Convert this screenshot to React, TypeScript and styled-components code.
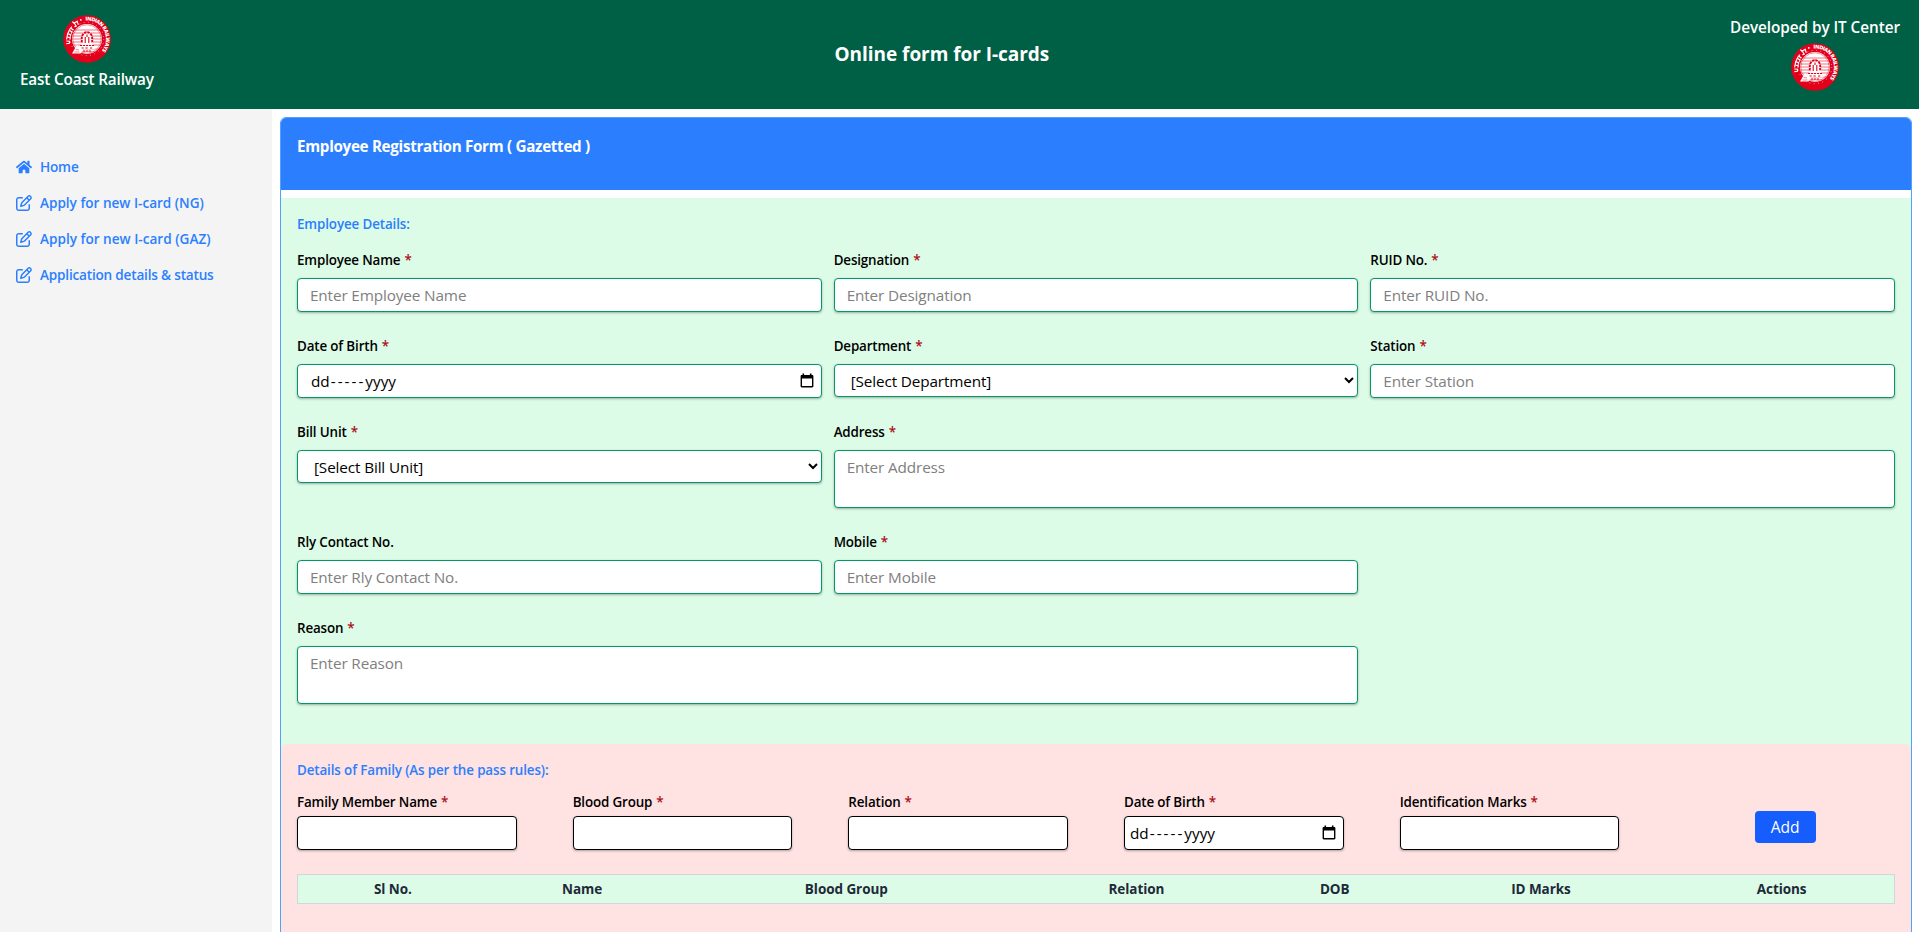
import React from 'react';
import styled, { createGlobalStyle, css } from 'styled-components';
import { FaHome } from 'react-icons/fa';
import { FaRegPenToSquare } from 'react-icons/fa6';

const GlobalStyle = createGlobalStyle`
  *, *::before, *::after { box-sizing: border-box; }
  body {
    margin: 0;
    background: #fff;
    color: #000;
    font-family: "Open Sans", "Noto Sans", sans-serif;
    overflow: hidden;
  }
  input, select, textarea, button { font: inherit; letter-spacing: inherit; margin: 0; }
`;

const Page = styled.div`
  height: 932px;
  display: flex;
  flex-direction: column;
  overflow: hidden;
`;

const Header = styled.header`
  flex: none;
  height: 109px;
  padding: 15px 19px 0 20px;
  display: flex;
  justify-content: space-between;
  background: #006045;
  color: #fff;
`;

const Brand = styled.div<{ $gap: number }>`
  display: flex;
  flex-direction: column;
  align-items: center;
  gap: ${(p) => p.$gap}px;
`;

const BrandText = styled.span<{ $track: number }>`
  font-size: 15.3px;
  font-weight: 600;
  line-height: 24px;
  letter-spacing: ${(p) => p.$track}px;
  white-space: nowrap;
`;

const Title = styled.h1`
  margin: 25px 0 0;
  font-size: 19px;
  font-weight: 700;
  line-height: 28px;
  letter-spacing: -0.04px;
`;

const Body = styled.div`
  flex: 1;
  min-height: 0;
  display: flex;
`;

const Sidebar = styled.nav`
  flex: none;
  width: 272px;
  padding: 40px 16px;
  background: #f4f4f4;
`;

const NavItem = styled.a<{ $track: number }>`
  display: flex;
  align-items: center;
  gap: 8px;
  height: 36px;
  color: #2b7fff;
  font-size: 13.6px;
  font-weight: 600;
  line-height: 20px;
  letter-spacing: ${(p) => p.$track}px;
  svg { flex: none; font-size: 16px; }
`;

const NavText = styled.span`
  padding-bottom: 1px;
`;

const Main = styled.main`
  flex: 1;
  min-width: 0;
  padding: 8px 7px 0 8px;
`;

const Card = styled.section`
  height: 900px;
  border: 1px solid #51a2ff;
  border-radius: 6px;
  overflow: hidden;
`;

const CardHeader = styled.div`
  height: 72px;
  padding: 16px;
  margin-bottom: 8px;
  background: #2b7fff;
  color: #fff;
  font-size: 15.2px;
  font-weight: 700;
  line-height: 24px;
  letter-spacing: -0.3px;
`;

const FormArea = styled.div`
  background: #dcfce7;
`;

const EmployeeSection = styled.section`
  padding: 16px 16px 40px;
`;

const FamilySection = styled.section`
  height: 300px;
  padding: 16px;
  border-radius: 6px 6px 0 0;
  background: #ffe2e2;
`;

const SectionTitle = styled.h2<{ $gap: number }>`
  margin: 0 0 ${(p) => p.$gap}px;
  color: #2b7fff;
  font-size: 13.4px;
  font-weight: 600;
  line-height: 20px;
  letter-spacing: -0.12px;
`;

const EmployeeGrid = styled.div`
  display: grid;
  grid-template-columns: repeat(3, 1fr);
  gap: 24px 12px;
  align-items: start;
`;

const FamilyGrid = styled.div`
  display: grid;
  grid-template-columns: repeat(6, 1fr);
  column-gap: 56px;
  align-items: start;
`;

const FieldBox = styled.label<{ $span?: number; $gap: number }>`
  display: flex;
  flex-direction: column;
  gap: ${(p) => p.$gap}px;
  min-width: 0;
  grid-column: span ${(p) => p.$span ?? 1};
`;

const LabelText = styled.span`
  font-size: 13.4px;
  font-weight: 600;
  line-height: 20px;
  letter-spacing: -0.15px;
  white-space: nowrap;
`;

const Star = styled.span`
  margin-left: 4px;
  color: #ac0f1a;
`;

type Tone = 'green' | 'black';

const control = css<{ $tone?: Tone }>`
  display: block;
  width: 100%;
  height: 34px;
  border: 1px solid ${(p) => (p.$tone === 'black' ? '#000' : '#009966')};
  border-radius: 4px;
  background: #fff;
  color: #000;
  font-size: 15.3px;
  line-height: 24px;
  letter-spacing: -0.13px;
  outline: none;
  box-shadow: 0 1px 3px rgba(0, 0, 0, 0.16), 0 1px 2px rgba(0, 0, 0, 0.16);
  &::placeholder { color: #808080; opacity: 1; }
`;

const Input = styled.input<{ $tone?: Tone }>`
  ${control}
  padding: 4px 12px;
`;

const Select = styled.select`
  ${control}
  height: 33px;
  padding: 4px 0 4px 12px;
`;

const TextArea = styled.textarea`
  ${control}
  height: 58px;
  padding: 4px 12px;
  resize: none;
`;

const DateBox = styled.span<{ $tone?: Tone }>`
  ${control}
  display: flex;
  align-items: center;
  justify-content: space-between;
  padding: ${(p) => (p.$tone === 'black' ? '0 7px 0 5px' : '0 7px 0 13px')};
  letter-spacing: 0;
`;

const DateText = styled.span`
  display: flex;
`;

const Dashes = styled.span`
  margin: 0 0 0 1px;
  letter-spacing: 2px;
`;

const AddButton = styled.button`
  justify-self: center;
  width: 61px;
  height: 32px;
  margin-top: 19px;
  padding: 0;
  border: 0;
  border-radius: 4px;
  background: #155dfc;
  color: #fff;
  font-size: 15.6px;
`;

const TableHead = styled.div`
  display: grid;
  grid-template-columns: 190fr 189fr 340fr 241fr 156fr 257fr 225fr;
  align-items: center;
  height: 30px;
  margin-top: 24px;
  border: 1px solid #d1d5dc;
  background: #dcfce7;
  color: #1e2939;
  font-size: 13.5px;
  font-weight: 700;
  letter-spacing: -0.06px;
  text-align: center;
`;

const CalendarIcon = () => (
  <svg width="14" height="16" viewBox="0 0 14 16">
    <path d="M2.5 0.5h1.6v1.6h5.8V0.5h1.6v1.6h.7c.7 0 1.2.5 1.2 1.2v9.9c0 .7-.5 1.2-1.2 1.2H1.8c-.7 0-1.2-.5-1.2-1.2V3.3c0-.7.5-1.2 1.2-1.2h.7zM2 5.6v7.5h10V5.6z" fill="#000" fillRule="evenodd" />
  </svg>
);

const RailwayLogo = ({ id }: { id: string }) => (
  <svg width="48" height="48" viewBox="0 0 48 48">
    <defs>
      <path id={id} d="M22.6 5.6A18.5 18.5 0 1 1 23.9 42.5" />
      <clipPath id={`${id}-disc`}><circle cx="24" cy="24" r="15" /></clipPath>
    </defs>
    <circle cx="24" cy="24" r="23.8" fill="#e3001b" />
    <circle cx="24" cy="24" r="16.7" fill="none" stroke="#fff" strokeWidth="0.9" strokeDasharray="0.9 3.5" opacity="0.7" />
    <circle cx="24" cy="24" r="15" fill="#fff" />
    <g clipPath={`url(#${id}-disc)`} stroke="#e3001b" strokeWidth="0.75">
      <path d="M9 15h30M9 18h30M9 21h30M9 24h30M9 27h30M9 30h30" opacity="0.75" />
      <path d="M13 34h22M15 36.5h18" opacity="0.5" />
    </g>
    <circle cx="24" cy="24" r="14.2" fill="none" stroke="#e3001b" strokeWidth="0.6" opacity="0.7" />
    <path d="M18.2 30V22.5a5.8 6.5 0 0 1 11.6 0V30l2 4H16.2z" fill="#fff" />
    <path d="M18.8 27.5v-4.5a5.2 5.8 0 0 1 10.4 0v4.5" fill="none" stroke="#e3001b" strokeWidth="1.9" strokeDasharray="2.6 0.7" />
    <path d="M22.2 28v-6M25.8 28v-6M24 19.5v2.5" fill="none" stroke="#e3001b" strokeWidth="1.1" />
    <path d="M17 30.5h14M18.5 33h2.5M22.5 33h3M27 33h2.5M20 36h8" fill="none" stroke="#e3001b" strokeWidth="1.1" strokeDasharray="2.2 0.8" />
    <path d="M14 30l-5 8.5h8.5l2.5-3.5z" fill="#fff" />
    <path d="M12.6 34.5l3.4.5M11.5 37h5" stroke="#e3001b" strokeWidth="0.5" />
    <g fill="none" stroke="#fff" strokeWidth="1.15">
      <path d="M3.6 24.5l1-5.5 2.2-4.8 2-2.6" />
      <path d="M3.2 28.8l3.7-.6M3.3 26l3.2.2-.1 2M4 22l3.3.7-.5 2M4.8 18.6l3 1.3-.8 1.9M6.2 15.2l2.9 1.8-1 1.4M7.8 13l2.6 2.2" />
      <path d="M10.4 8.6l4.4-2.7M11.4 8.2l1.8 3-1.9.6M9.2 6.8l2.2 1.3M14 6.4l1.4 3.4" />
    </g>
    <circle cx="17.8" cy="4.9" r="0.9" fill="#fff" />
    <text fill="#fff" fontFamily="Open Sans, sans-serif" fontSize="5.3" fontWeight="800">
      <textPath href={`#${id}`} startOffset="0" textLength="43.5" lengthAdjust="spacing">INDIAN RAILWAYS</textPath>
    </text>
  </svg>
);

const DateControl = ({ tone }: { tone?: Tone }) => (
  <DateBox $tone={tone}>
    <DateText>dd<Dashes>-----</Dashes>yyyy</DateText>
    <CalendarIcon />
  </DateBox>
);

interface FieldProps {
  label: string;
  required?: boolean;
  span?: number;
  gap?: number;
  children: React.ReactNode;
}

const Field = ({ label, required = true, span, gap = 8, children }: FieldProps) => (
  <FieldBox $span={span} $gap={gap}>
    <LabelText>{label}{required && <Star>*</Star>}</LabelText>
    {children}
  </FieldBox>
);

const columns = ['Sl No.', 'Name', 'Blood Group', 'Relation', 'DOB', 'ID Marks', 'Actions'];

export default function App() {
  return (
    <Page>
      <GlobalStyle />
      <Header>
        <Brand $gap={4}>
          <RailwayLogo id="logo-left" />
          <BrandText $track={-0.18}>East Coast Railway</BrandText>
        </Brand>
        <Title>Online form for I-cards</Title>
        <Brand $gap={4}>
          <BrandText $track={-0.05}>Developed by IT Center</BrandText>
          <RailwayLogo id="logo-right" />
        </Brand>
      </Header>
      <Body>
        <Sidebar>
          <NavItem $track={-0.2}><FaHome /><NavText>Home</NavText></NavItem>
          <NavItem $track={-0.02}><FaRegPenToSquare /><NavText>Apply for new I-card (NG)</NavText></NavItem>
          <NavItem $track={0}><FaRegPenToSquare /><NavText>Apply for new I-card (GAZ)</NavText></NavItem>
          <NavItem $track={-0.2}><FaRegPenToSquare /><NavText>Application details &amp; status</NavText></NavItem>
        </Sidebar>
        <Main>
          <Card>
            <CardHeader>Employee Registration Form ( Gazetted )</CardHeader>
            <FormArea>
              <EmployeeSection>
                <SectionTitle $gap={16}>Employee Details:</SectionTitle>
                <EmployeeGrid>
                  <Field label="Employee Name"><Input placeholder="Enter Employee Name" /></Field>
                  <Field label="Designation"><Input placeholder="Enter Designation" /></Field>
                  <Field label="RUID No."><Input placeholder="Enter RUID No." /></Field>
                  <Field label="Date of Birth"><DateControl /></Field>
                  <Field label="Department">
                    <Select><option>[Select Department]</option></Select>
                  </Field>
                  <Field label="Station"><Input placeholder="Enter Station" /></Field>
                  <Field label="Bill Unit">
                    <Select><option>[Select Bill Unit]</option></Select>
                  </Field>
                  <Field label="Address" span={2}><TextArea placeholder="Enter Address" /></Field>
                  <Field label="Rly Contact No." required={false}><Input placeholder="Enter Rly Contact No." /></Field>
                  <Field label="Mobile"><Input placeholder="Enter Mobile" /></Field>
                  <span />
                  <Field label="Reason" span={2}><TextArea placeholder="Enter Reason" /></Field>
                </EmployeeGrid>
              </EmployeeSection>
              <FamilySection>
                <SectionTitle $gap={12}>Details of Family (As per the pass rules):</SectionTitle>
                <FamilyGrid>
                  <Field label="Family Member Name" gap={4}><Input $tone="black" /></Field>
                  <Field label="Blood Group" gap={4}><Input $tone="black" /></Field>
                  <Field label="Relation" gap={4}><Input $tone="black" /></Field>
                  <Field label="Date of Birth" gap={4}><DateControl tone="black" /></Field>
                  <Field label="Identification Marks" gap={4}><Input $tone="black" /></Field>
                  <AddButton type="button">Add</AddButton>
                </FamilyGrid>
                <TableHead>
                  {columns.map((name) => <span key={name}>{name}</span>)}
                </TableHead>
              </FamilySection>
            </FormArea>
          </Card>
        </Main>
      </Body>
    </Page>
  );
}
